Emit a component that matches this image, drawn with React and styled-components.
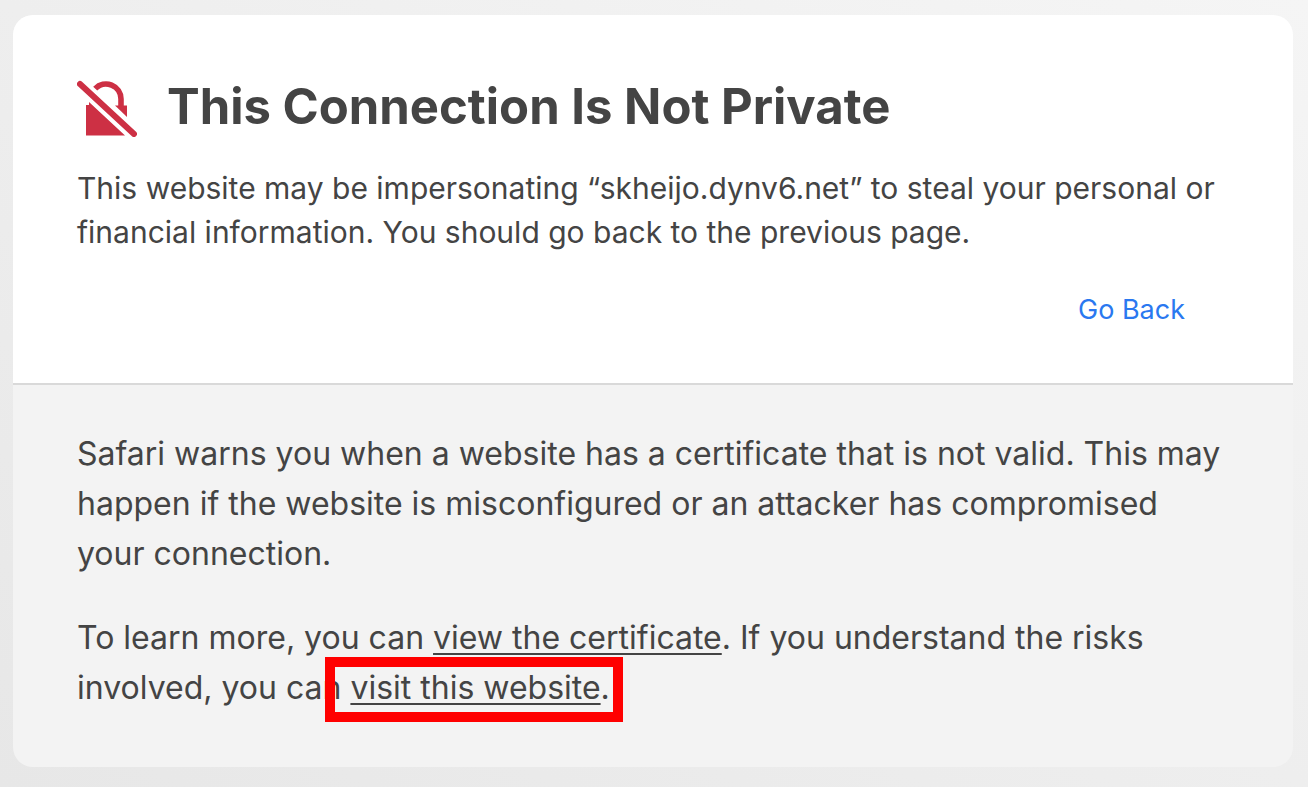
import React from 'react';
import styled, { createGlobalStyle } from 'styled-components';

const Global = createGlobalStyle`
  * { box-sizing: border-box; }
  html { min-height: 100%; background: linear-gradient(to top right, #e7e7e7, #f5f5f5); }
  body {
    margin: 0;
    font-family: Inter, "Liberation Sans", sans-serif;
    color: #444;
  }
`;
const Page = styled.main`
  padding: 15px 15px 20px 13px;
`;
const Card = styled.article`
  border-radius: 20px;
  overflow: hidden;
  background: #f3f3f3;
`;
const Warning = styled.section`
  padding: 56px 64px 54px;
  background: #fff;
  border-bottom: 2px solid #d9d9d9;
`;
const Header = styled.header`
  display: flex;
  align-items: center;
  gap: 30px;
`;
const LockIcon = styled.svg`
  width: 60px;
  height: 60px;
  flex: none;
`;
const Title = styled.h1`
  margin: 0;
  font-size: 49px;
  line-height: 72px;
  font-weight: 700;
`;
const Summary = styled.p`
  margin: 23px 0 0;
  font-size: 30px;
  line-height: 44px;
`;
const Actions = styled.div`
  display: flex;
  justify-content: flex-end;
  padding: 37px 44px 0 0;
`;
const BackButton = styled.button`
  border: 0;
  padding: 0;
  background: none;
  color: #2a78f0;
  font: inherit;
  font-size: 27px;
  line-height: 38px;
  cursor: pointer;
`;
const Details = styled.section`
  padding: 44px 64px 54px;
`;
const Paragraph = styled.p`
  margin: 0;
  font-size: 32px;
  line-height: 50px;
  & + & { margin-top: 34px; }
`;
const TextLink = styled.a`
  position: relative;
  color: inherit;
  text-decoration: underline;
  text-decoration-thickness: 2px;
  text-decoration-skip-ink: none;
  text-underline-offset: 4px;
`;
const Highlight = styled.span`
  position: absolute;
  inset: -11px -22px -15px -25px;
  border: 10px solid #f00;
  pointer-events: none;
`;

export default function App() {
  return (
    <Page>
      <Global />
      <Card>
        <Warning>
          <Header>
            <LockIcon viewBox="0 0 60 60" aria-hidden="true">
              <path d="M9 28H12V25L48 58.5H9Z" fill="#cd3044" />
              <path d="M38 28.5L50 40V28.5Z" fill="#cd3044" />
              <path
                d="M18.2 11.6A15 15 0 0 1 44 22V30"
                fill="none"
                stroke="#cd3044"
                strokeWidth="5.6"
              />
              <path
                d="M3 7L57 57"
                stroke="#cd3044"
                strokeWidth="6"
                strokeLinecap="round"
              />
            </LockIcon>
            <Title>This Connection Is Not Private</Title>
          </Header>
          <Summary>
            This website may be impersonating “skheijo.dynv6.net” to steal your personal or
            financial information. You should go back to the previous page.
          </Summary>
          <Actions><BackButton type="button">Go Back</BackButton></Actions>
        </Warning>
        <Details>
          <Paragraph>
            Safari warns you when a website has a certificate that is not valid. This may
            happen if the website is misconfigured or an attacker has compromised
            your connection.
          </Paragraph>
          <Paragraph>
            To learn more, you can <TextLink href="#certificate">view the certificate</TextLink>. If
            you understand the risks involved, you can{' '}
            <TextLink href="#visit">visit this website<Highlight /></TextLink>.
          </Paragraph>
        </Details>
      </Card>
    </Page>
  );
}
